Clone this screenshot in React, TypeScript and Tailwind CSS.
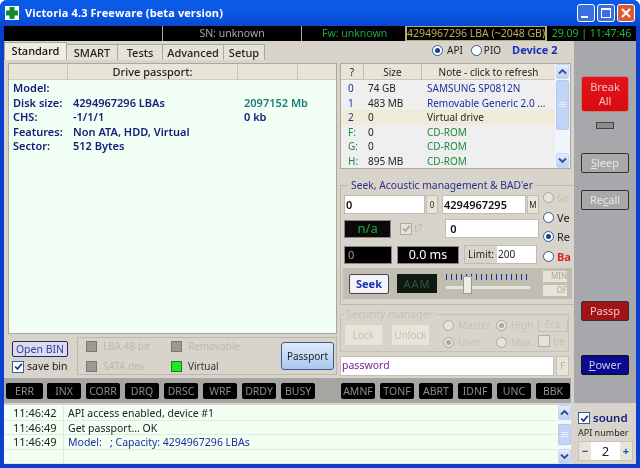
import React from "react";

const FONT = "font-['Noto_Sans','DejaVu_Sans',sans-serif]";

function Led({ t, w = "w-[34px]" }: { t: string; w?: string }) {
  return (
    <div className={`${w} h-[16px] bg-black rounded-[2px] text-[#8c8c8c] text-[10.5px] leading-[16px] text-center`}>{t}</div>
  );
}

function Radio({ on, dim, className = "" }: { on?: boolean; dim?: boolean; className?: string }) {
  return (
    <span className={`inline-flex shrink-0 w-[11px] h-[11px] rounded-full border items-center justify-center ${dim ? "border-[#a8a89c] bg-[#e6e3d8]" : "border-[#2a5d92] bg-white"} ${className}`}>
      {on && <span className={`w-[5px] h-[5px] rounded-full ${dim ? "bg-[#a8a89c]" : "bg-[#1c3f94]"}`} />}
    </span>
  );
}

function Check({ on = true, dim }: { on?: boolean; dim?: boolean }) {
  return (
    <span className={`inline-flex shrink-0 w-[12px] h-[12px] border items-center justify-center ${dim ? "border-[#b0ada0] bg-[#e4e1d6]" : "border-[#3a5f8f] bg-white"}`}>
      {on && (
        <svg width="9" height="9" viewBox="0 0 9 9">
          <path d="M1.2 4.5 L3.5 7 L7.8 1.8" fill="none" stroke={dim ? "#a8a89c" : "#1c2f8c"} strokeWidth="1.8" />
        </svg>
      )}
    </span>
  );
}

function ScrollBtn({ up }: { up?: boolean }) {
  return (
    <div className="w-[13px] h-[15px] shrink-0 bg-gradient-to-b from-[#e4edff] to-[#bcd0f5] rounded-[2px] border border-[#c6d6f5] flex items-center justify-center">
      <svg width="9" height="7" viewBox="0 0 9 7">
        <path d={up ? "M1 5.5 L4.5 2 L8 5.5" : "M1 1.5 L4.5 5 L8 1.5"} fill="none" stroke="#34508c" strokeWidth="1.8" />
      </svg>
    </div>
  );
}

function Thumb({ className }: { className: string }) {
  return (
    <div className={`w-[13px] bg-[#c2d4f6] border border-[#b4c8f0] rounded-[2px] flex flex-col items-center justify-center gap-[1px] ${className}`}>
      <span className="w-[7px] h-px bg-[#e8efff]" />
      <span className="w-[7px] h-px bg-[#e8efff]" />
      <span className="w-[7px] h-px bg-[#e8efff]" />
    </div>
  );
}

function SideBtn({ t, cls, mt }: { t: React.ReactNode; cls: string; mt: string }) {
  return (
    <div className={`w-[48px] h-[20px] rounded-[2px] border flex items-center justify-center text-[11px] ${cls} ${mt}`}>{t}</div>
  );
}

const rows = [
  { k: "0", s: "74 GB", n: "SAMSUNG SP0812N", c: "text-[#1a2f9c]", bg: "bg-[#efefef]", kc: "text-[#1a2f9c]" },
  { k: "1", s: "483 MB", n: "Removable Generic 2.0 ...", c: "text-[#1a2f9c]", bg: "bg-[#efefef]", kc: "text-[#1a2f9c]" },
  { k: "2", s: "0", n: "Virtual drive", c: "text-[#2a2a2a]", bg: "bg-[#f0ead8]", kc: "text-[#1a2f9c]" },
  { k: "F:", s: "0", n: "CD-ROM", c: "text-[#1d8a3c]", bg: "bg-[#efefef]", kc: "text-[#1d8a3c]" },
  { k: "G:", s: "0", n: "CD-ROM", c: "text-[#1d8a3c]", bg: "bg-[#efefef]", kc: "text-[#1d8a3c]" },
  { k: "H:", s: "895 MB", n: "CD-ROM", c: "text-[#1d8a3c]", bg: "bg-[#efefef]", kc: "text-[#1d8a3c]" },
];

const logs = [
  { t: "11:46:42", m: "API access enabled, device #1", c: "text-[#222]" },
  { t: "11:46:49", m: "Get passport... OK", c: "text-[#222]" },
  { t: "11:46:49", m: "Model:   ; Capacity: 4294967296 LBAs", c: "text-[#1a2f9c]" },
  { t: "", m: "", c: "" },
];

const TAB = "h-[16px] shrink-0 border-t border-r border-[#aaa89c] bg-[#e4e1d6] font-medium text-center leading-[15px] whitespace-nowrap";

export default function App() {
  return (
    <div className={`${FONT} w-[640px] h-[468px] overflow-hidden flex flex-col bg-[#0a3fd0] rounded-t-[7px] text-[10px] text-[#222] blur-[0.3px]`}>
      {/* Title bar */}
      <div className="h-[26px] shrink-0 flex items-center pl-[5px] pr-[5px] bg-gradient-to-b from-[#0a5be8] via-[#0a58e4] to-[#0a47cf]">
        <div className="w-[14px] h-[14px] bg-white flex items-center justify-center">
          <svg width="14" height="14" viewBox="0 0 14 14">
            <path d="M4.5 1h5v3.5H13v5H9.5V13h-5V9.5H1v-5h3.5z" fill="#0d8a2c" />
          </svg>
        </div>
        <span className="ml-[6px] text-white font-bold text-[11px] tracking-[0.1px] font-['Open_Sans',sans-serif]">Victoria 4.3 Freeware (beta version)</span>
        <div className="ml-auto flex gap-[2px]">
          <div className="w-[18px] h-[18px] rounded-[3px] border border-white bg-[#3a6fe0] flex items-end pl-[3px] pb-[3px]"><span className="w-[7px] h-[2px] bg-white" /></div>
          <div className="w-[18px] h-[18px] rounded-[3px] border border-white bg-[#3a6fe0] flex items-center justify-center"><span className="w-[10px] h-[10px] border border-white border-t-2" /></div>
          <div className="w-[18px] h-[18px] rounded-[3px] border border-white bg-[#dc5a30] flex items-center justify-center">
            <svg width="12" height="12" viewBox="0 0 12 12"><path d="M2 2 L10 10 M10 2 L2 10" stroke="white" strokeWidth="2" /></svg>
          </div>
        </div>
      </div>

      {/* Client */}
      <div className="mx-[4px] mb-[4px] flex-1 min-h-0 bg-[#d8d4cb] flex flex-col">
        {/* Status strip */}
        <div className="h-[15px] shrink-0 flex gap-[1px] text-[10.5px] leading-[15px] bg-[#a8a8a0]">
          <div className="w-[158px] bg-black" />
          <div className="w-[138px] bg-black text-[#a8a8a8] text-center">SN: unknown</div>
          <div className="w-[103px] bg-black text-[#1aa83a] pl-[20px] whitespace-nowrap">Fw: unknown</div>
          <div className="w-[140px] bg-black text-[#b8b060] border border-[#b8b060] leading-[13px] text-center whitespace-nowrap overflow-hidden">4294967296 LBA (~2048 GB)</div>
          <div className="flex-1 bg-black text-[#22b83a] text-center whitespace-nowrap overflow-hidden">29.09 | 11:47:46</div>
        </div>

        <div className="flex-1 min-h-0 flex">
          {/* Left body */}
          <div className="w-[567px] shrink-0 flex flex-col">
            <div className="flex-1 min-h-0 flex flex-col">
              {/* Tabs line */}
              <div className="h-[19px] shrink-0 flex items-end text-[11px]">
                <div className="w-[63px] h-[18px] shrink-0 bg-[#efece2] border border-b-0 border-[#aaa89c] font-medium text-center leading-[16px] text-[#111]">Standard</div>
                <div className={`w-[51px] ${TAB}`}>SMART</div>
                <div className={`w-[45px] ${TAB}`}>Tests</div>
                <div className={`w-[61px] ${TAB}`}>Advanced</div>
                <div className={`w-[41px] ${TAB}`}>Setup</div>
                <div className="flex items-center self-center ml-[167px] whitespace-nowrap text-[10px]">
                  <Radio on /><span className="ml-[4px]">API</span><Radio className="ml-[8px]" /><span className="ml-[2px]">PIO</span>
                  <span className="ml-[11px] text-[#1a2fb8] font-bold text-[11px]">Device 2</span>
                </div>
                <div className="flex items-center self-center ml-[27px] gap-[3px] pt-[3px] text-[10px]"><Check /><span>Hints</span></div>
              </div>

              <div className="flex-1 min-h-0 flex pl-[4px] pt-[3px] gap-[3px]">
                {/* Left column */}
                <div className="w-[329px] shrink-0 flex flex-col">
                  <div className="h-[271px] bg-[#f2fff4] border border-[#a8a89c] flex flex-col text-[11px]">
                    <div className="h-[16px] shrink-0 flex bg-[#e8e5d8] leading-[16px] text-[#222] font-medium border-b border-[#d0cdbf]">
                      <div className="w-[59px] border-r border-[#c8c5b8]" />
                      <div className="w-[170px] border-r border-[#c8c5b8] text-center">Drive passport:</div>
                      <div className="w-[60px] border-r border-[#c8c5b8]" />
                    </div>
                    <div className="pl-[4px] pt-[1px] text-[#14207a] font-semibold leading-[14.5px]">
                      <div>Model:</div>
                      <div className="flex"><span className="w-[60px]">Disk size:</span><span className="w-[171px]">4294967296 LBAs</span><span className="text-[#1f7a7a]">2097152 Mb</span></div>
                      <div className="flex"><span className="w-[60px]">CHS:</span><span className="w-[171px]">-1/1/1</span><span>0 kb</span></div>
                      <div className="flex"><span className="w-[60px]">Features:</span><span>Non ATA, HDD, Virtual</span></div>
                      <div className="flex"><span className="w-[60px]">Sector:</span><span>512 Bytes</span></div>
                    </div>
                  </div>
                  <div className="mt-[3px] flex gap-[1px] h-[38px]">
                    <div className="w-[68px] pl-[4px] pt-[4px] shrink-0">
                      <div className="w-[56px] h-[16px] border border-[#222a60] rounded-[2px] bg-[#dcdcea] text-[#2a3fb0] text-center leading-[14px] text-[10.5px]">Open BIN</div>
                      <div className="flex items-center gap-[3px] mt-[2px]"><Check /><span className="text-[10.5px] whitespace-nowrap">save bin</span></div>
                    </div>
                    <div className="flex-1 border border-[#bbb8ac] flex items-center pl-[8px] pr-[2px] text-[10px] whitespace-nowrap">
                      <div className="grid grid-cols-[85px_84px] gap-y-[5px]">
                        <div className="flex items-center gap-[6px] text-[#bcb9ad]"><span className="w-[11px] h-[11px] bg-[#9a9a94] border border-[#777]" />LBA 48 bit</div>
                        <div className="flex items-center gap-[6px] text-[#bcb9ad]"><span className="w-[11px] h-[11px] bg-[#9a9a94] border border-[#777]" />Removable</div>
                        <div className="flex items-center gap-[6px] text-[#bcb9ad]"><span className="w-[11px] h-[11px] bg-[#9a9a94] border border-[#777]" />SATA dev</div>
                        <div className="flex items-center gap-[6px] text-[#333]"><span className="w-[11px] h-[11px] bg-[#22e822] border border-[#1a801a]" />Virtual</div>
                      </div>
                      <div className="ml-auto w-[53px] h-[28px] border border-[#3a5c8c] rounded-[3px] bg-gradient-to-b from-[#dfeafa] to-[#a9c8ee] text-center leading-[26px] text-[#222]">Passport</div>
                    </div>
                  </div>
                </div>

                {/* Right column */}
                <div className="w-[231px] shrink-0 flex flex-col">
                  <div className="h-[106px] shrink-0 border border-[#a8a89c] bg-[#f4f4f0] flex">
                    <div className="flex-1 min-w-0 flex flex-col">
                      <div className="h-[16px] shrink-0 flex bg-[#e8e5d8] text-center leading-[16px] border-b border-[#c8c5b8]">
                        <div className="w-[23px] border-r border-[#c0bdb0]">?</div>
                        <div className="w-[58px] border-r border-[#c0bdb0]">Size</div>
                        <div className="flex-1">Note - click to refresh</div>
                      </div>
                      <div className="pt-[1px]">
                        {rows.map((r, i) => (
                          <div key={i} className={`h-[14.5px] flex leading-[14px] whitespace-nowrap ${r.bg}`}>
                            <div className={`w-[23px] pl-[7px] ${r.kc}`}>{r.k}</div>
                            <div className="w-[58px] pl-[4px]">{r.s}</div>
                            <div className={`flex-1 pl-[5px] ${r.c}`}>{r.n}</div>
                          </div>
                        ))}
                      </div>
                    </div>
                    <div className="w-[15px] shrink-0 bg-[#f2f5fc] flex flex-col items-center justify-between">
                      <ScrollBtn up />
                      <Thumb className="h-[50px] mb-[23px]" />
                      <ScrollBtn />
                    </div>
                  </div>

                  <fieldset className="mt-[10px] mr-[3px] h-[126px] border border-[#bbb8ac] px-[3px] overflow-hidden">
                    <legend className="ml-[5px] px-[2px] text-[#2a2f8c] text-[10.3px] leading-[12px] whitespace-nowrap">Seek, Acoustic management &amp; BAD'er</legend>
                    <div className="flex">
                      <div className="w-[195px] shrink-0 pt-[4px]">
                        <div className="flex items-center h-[19px]">
                          <div className="w-[81px] h-[19px] bg-white border border-[#c0bdb0] font-semibold text-[11px] text-[#111] pl-[1px] leading-[17px]">0</div>
                          <div className="w-[12px] h-[19px] ml-[1px] bg-[#e8e5d8] border border-[#c0bdb0] text-[8px] text-center leading-[17px]">0</div>
                          <div className="w-[84px] h-[19px] ml-[4px] bg-white border border-[#c0bdb0] font-semibold text-[11px] text-[#111] pl-[1px] leading-[17px]">4294967295</div>
                          <div className="w-[12px] h-[19px] ml-[1px] bg-[#e8e5d8] border border-[#c0bdb0] text-[8px] text-center leading-[17px]">M</div>
                        </div>
                        <div className="flex items-center h-[19px] mt-[5px]">
                          <div className="w-[48px] h-[18px] bg-[#0a0a0a] border border-[#888] text-[#22a83a] text-[13px] leading-[15px] text-center">n/a</div>
                          <div className="ml-[9px] flex items-center gap-[2px]"><Check dim /><span className="text-[#bcb9ad]">t?</span></div>
                          <div className="ml-[23px] w-[95px] h-[19px] bg-white border border-[#c0bdb0] font-semibold text-[11px] pl-[4px] leading-[17px] text-[#111]">0</div>
                        </div>
                        <div className="flex items-center h-[19px] mt-[7px]">
                          <div className="w-[48px] h-[18px] bg-black border border-[#888] text-[#999] pl-[3px] leading-[15px] text-[11px]">0</div>
                          <div className="ml-[5px] w-[62px] h-[18px] bg-black border border-[#888] text-white text-[12.5px] leading-[15px] text-center">0.0 ms</div>
                          <div className="ml-[5px] w-[73px] h-[19px] flex border border-[#c0bdb0]">
                            <span className="w-[32px] bg-[#d8d4cb] text-center leading-[16px]">Limit:</span>
                            <span className="flex-1 bg-white pl-[1px] leading-[17px]">200</span>
                          </div>
                        </div>
                      </div>
                      <div className="ml-[4px] pt-[1px] flex flex-col gap-[8.5px] text-[11px] leading-[11px] whitespace-nowrap">
                        <div className="flex items-center gap-[3px] text-[#c4c1b5]"><Radio dim />Se</div>
                        <div className="flex items-center gap-[3px]"><Radio />Ve</div>
                        <div className="flex items-center gap-[3px]"><Radio on />Re</div>
                        <div className="flex items-center gap-[3px] text-[#e02020] font-bold"><Radio />Ba</div>
                      </div>
                    </div>
                    <div className="mt-[4px] h-[31px] -mx-[1px] bg-[#c0bdb2] flex items-center pl-[6px] text-[11px]">
                      <div className="w-[40px] h-[20px] bg-[#f4f4f8] border border-[#444] rounded-[2px] text-[#1a2fb8] font-bold text-center leading-[17px]">Seek</div>
                      <div className="ml-[8px] w-[40px] h-[19px] bg-[#0c1a10] text-[#3f4f44] text-[11px] tracking-[1px] text-center leading-[19px]">AAM</div>
                      <div className="ml-[9px] w-[84px] flex flex-col h-[24px] relative">
                        <div className="h-[6px] mt-[2px] bg-[repeating-linear-gradient(90deg,#1a2f9c_0,#1a2f9c_1px,transparent_1px,transparent_5px)]" />
                        <div className="h-[3px] mt-[6px] bg-[#e8e5d8]" />
                        <div className="absolute left-[17px] top-[4px] w-[9px] h-[18px] bg-[#efece0] border border-[#999]" />
                      </div>
                      <div className="ml-[13px] flex flex-col gap-[3px] text-[8px] text-[#aaa79a] text-right leading-[10px]">
                        <div className="w-[24px] h-[11px] bg-[#e8e5d8] overflow-hidden">MIN</div>
                        <div className="w-[24px] h-[11px] bg-[#e8e5d8] overflow-hidden">OF</div>
                      </div>
                    </div>
                  </fieldset>

                  <fieldset className="mt-[3px] mr-[3px] h-[44px] border border-[#c4c1b5] overflow-hidden text-[#c4c1b5] text-[10px] whitespace-nowrap">
                    <legend className="ml-[3px] px-[2px] leading-[12px] text-[10.5px]">Security manager</legend>
                    <div className="flex items-start pl-[4px]">
                      <div className="mt-[5px] w-[37px] h-[20px] bg-[#e8e5d8] text-center leading-[20px]">Lock</div>
                      <div className="mt-[5px] ml-[10px] w-[37px] h-[20px] bg-[#e8e5d8] text-center leading-[20px]">Unlock</div>
                      <div className="ml-[14px] grid grid-cols-[53px_41px] gap-y-[6px] shrink-0 leading-[11px]">
                        <div className="flex items-center gap-[4px]"><Radio dim />Master</div>
                        <div className="flex items-center gap-[4px]"><Radio dim on />High</div>
                        <div className="flex items-center gap-[4px]"><Radio dim on />User</div>
                        <div className="flex items-center gap-[4px]"><Radio dim />Max</div>
                      </div>
                      <div className="ml-[1px] flex flex-col gap-[3px] -mt-[3px] shrink-0 leading-[12px]">
                        <div className="w-[30px] h-[15px] border border-[#c4c1b5] pl-[6px] leading-[13px]">Era</div>
                        <div className="flex items-center gap-[3px]"><Check on={false} dim />be</div>
                      </div>
                    </div>
                  </fieldset>

                  <div className="mt-[4px] flex items-center">
                    <div className="w-[214px] h-[20px] bg-white border border-[#c4c1b5] text-[#7a1f8c] pl-[1px] leading-[17px] text-[10.5px]">password</div>
                    <div className="ml-[2px] w-[13px] h-[20px] bg-[#e8e5d8] border border-[#c4c1b5] text-[#aaa79a] text-center text-[9px] leading-[18px]">F</div>
                  </div>
                </div>
              </div>
            </div>

            {/* LED row */}
            <div className="h-[25px] shrink-0 mt-[1px] bg-[#a5a5a1] flex items-center pl-[2px] pr-[1px] pt-[1px] gap-[5px]">
              <Led t="ERR" w="w-[37px] mr-[-1px]" />
              {["INX", "CORR", "DRQ", "DRSC", "WRF", "DRDY", "BUSY"].map((t) => <Led key={t} t={t} />)}
              <div className="flex-1" />
              {["AMNF", "TONF", "ABRT", "IDNF", "UNC", "BBK"].map((t) => <Led key={t} t={t} />)}
            </div>
          </div>

          {/* Right gray panel */}
          <div className="ml-[3px] flex-1 bg-[#a6a8ab] flex flex-col items-center">
            <div className="mt-[35px] w-[48px] h-[36px] rounded-[3px] border border-[#c08080] bg-gradient-to-b from-[#e0141a] to-[#d80c10] text-[#f0c0c0] text-[11px] text-center leading-[14px] pt-[3px]">Break<br />All</div>
            <div className="mt-[10px] w-[18px] h-[7px] bg-[#8c8c88] border border-[#444]" />
            <SideBtn t={<><u>S</u>leep</>} cls="bg-[#a8a8a6] border-[#333] text-[#e8e8e8]" mt="mt-[24px]" />
            <SideBtn t={<>Re<u>c</u>all</>} cls="bg-[#a8a8a6] border-[#333] text-[#e8e8e8]" mt="mt-[17px]" />
            <SideBtn t="Passp" cls="bg-[#a01418] border-[#333] text-[#f0c8c8]" mt="mt-[91px]" />
            <SideBtn t={<><u>P</u>ower</>} cls="bg-[#0a0a90] border-[#111] text-[#c8c8f0]" mt="mt-[34px]" />
          </div>
        </div>

        {/* Bottom */}
        <div className="h-[61px] shrink-0 flex border-t-2 border-[#d8d4cb]">
          <div className="w-[567px] shrink-0 bg-[#f2fff2] flex">
            <div className="flex-1 min-w-0 pt-[1px]">
              {logs.map((l, i) => (
                <div key={i} className="h-[14.5px] flex border-b border-[#e0ecdc] leading-[14px] whitespace-pre">
                  <div className="w-[60px] pl-[9px] border-r border-[#dde8d8] text-[#222] text-[11px]">{l.t}</div>
                  <div className={`pl-[4px] text-[10.5px] ${l.c}`}>{l.m}</div>
                </div>
              ))}
            </div>
            <div className="w-[13px] shrink-0 bg-[#f2f5fc] flex flex-col items-center justify-between">
              <ScrollBtn up />
              <Thumb className="h-[21px]" />
              <ScrollBtn />
            </div>
          </div>
          <div className="ml-[3px] flex-1 pl-[4px] pt-[6px]">
            <div className="flex items-center gap-[3px]"><Check /><span className="text-[#14207a] font-semibold text-[11.5px] leading-[14px]">sound</span></div>
            <div className="text-[9px] mt-[2px] leading-[12px] whitespace-nowrap">API number</div>
            <div className="mt-[2px] flex w-[55px] h-[20px] border border-[#c8c5b8] bg-white text-center leading-[18px] text-[11px]">
              <span className="w-[12px] bg-[#e8e5d8] text-[#1a4fb0] font-bold">−</span>
              <span className="flex-1 text-[13px]">2</span>
              <span className="w-[12px] bg-[#e8e5d8] text-[#1a4fb0] font-bold">+</span>
            </div>
          </div>
        </div>
      </div>
    </div>
  );
}
